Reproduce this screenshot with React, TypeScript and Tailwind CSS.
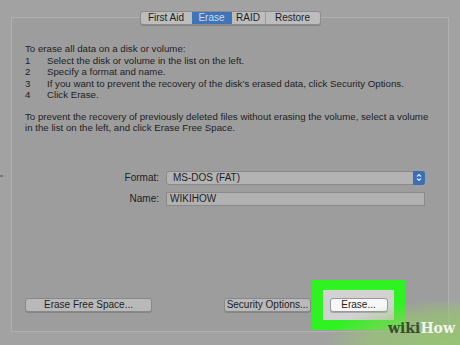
export default function App() {
  const steps = [
    "Select the disk or volume in the list on the left.",
    "Specify a format and name.",
    "If you want to prevent the recovery of the disk\u2019s erased data, click Security Options.",
    "Click Erase.",
  ];
  const tabs = ["First Aid", "Erase", "RAID", "Restore"];
  const tabW = ["w-[51px]", "w-[40px]", "w-[33px]", "w-[55px]"];

  return (
    <div className="relative w-[460px] h-[345px] overflow-hidden bg-[#a2a2a2] pt-[11px] text-[#1e1e1e] [font-family:'Liberation_Sans',Arial,sans-serif]">
      {/* segmented tabs */}
      <div className="relative z-10 flex justify-center">
        <div className="flex h-[14px] rounded-[3px] border border-[#8c8c8c] bg-[#bdbdbd] shadow-[0_1px_0_rgba(0,0,0,0.15)] overflow-hidden text-[10px] leading-[12px]">
          {tabs.map((t, i) => (
            <div
              key={t}
              className={
                tabW[i] +
                " flex items-center justify-center " +
                (t === "Erase" ? "bg-[#3f74b8] text-[#c9dbf2]" : "text-[#1e1e1e]") +
                (i > 0 && t !== "Erase" && tabs[i - 1] !== "Erase" ? " border-l border-[#9a9a9a]" : "")
              }
            >
              {t}
            </div>
          ))}
        </div>
      </div>

      {/* panel */}
      <div className="mx-[11px] -mt-[8px] h-[315px] border border-[#b0b0b0] bg-[#9d9d9d] px-[13px] pt-[25px] flex flex-col text-[9.7px] leading-[11.5px] whitespace-nowrap">
        <p>To erase all data on a disk or volume:</p>
        {steps.map((s, i) => (
          <div key={i} className="flex">
            <span className="w-[22px] shrink-0">{i + 1}</span>
            <span>{s}</span>
          </div>
        ))}
        <p className="mt-[10px]">
          To prevent the recovery of previously deleted files without erasing the volume, select a volume
          <br />
          in the list on the left, and click Erase Free Space.
        </p>

        {/* format / name */}
        <div className="mt-[37px] flex flex-col gap-[7px] text-[10px]">
          <div className="flex items-center">
            <span className="w-[141px] text-right pr-[7px] shrink-0">Format:</span>
            <div className="flex h-[14px] w-[259px] items-center justify-between rounded-[3px] border border-[#8a8a8a] bg-[#b3b3b3] pl-[6px]">
              <span>MS-DOS (FAT)</span>
              <div className="flex h-[14px] w-[12px] items-center justify-center rounded-r-[3px] bg-[#3a6fb5] -mr-px">
                <svg width="6" height="9" viewBox="0 0 6 9" fill="none" stroke="#dbe7f7" strokeWidth="1.2">
                  <path d="M1 3.5 L3 1.5 L5 3.5" />
                  <path d="M1 5.5 L3 7.5 L5 5.5" />
                </svg>
              </div>
            </div>
          </div>
          <div className="flex items-center">
            <span className="w-[141px] text-right pr-[7px] shrink-0">Name:</span>
            <div className="flex h-[14px] w-[259px] items-center border border-[#8a8a8a] bg-[#b1b1b1] pl-[3px]">
              WIKIHOW
            </div>
          </div>
        </div>

        {/* buttons */}
        <div className="mt-auto mb-[1px] flex items-center text-[10px]">
          <div className="flex h-[14px] w-[127px] items-center justify-center rounded-[3px] border border-[#888] bg-[#b9b9b9] shadow-[0_1px_0_rgba(0,0,0,0.15)]">
            Erase Free Space...
          </div>
          <div className="ml-[72px] flex h-[14px] w-[87px] items-center justify-center rounded-[3px] border border-[#888] bg-[#b9b9b9] shadow-[0_1px_0_rgba(0,0,0,0.15)]">
            Security Options...
          </div>
          <div className="ml-[1px] flex h-[50px] w-[93px] items-center justify-center bg-[#2ef222]">
            <div className="flex h-[30px] w-[71px] items-center justify-center bg-[#d2d2d2]">
              <div className="flex h-[14px] w-[58px] items-center justify-center rounded-[3px] border border-[#999] bg-[#f7f7f7] shadow-[0_1px_0_rgba(0,0,0,0.2)]">
                Erase...
              </div>
            </div>
          </div>
        </div>
      </div>

      {/* side mark */}
      <div className="absolute left-0 top-[175px] h-[2px] w-[3px] bg-[#7a7a7a]" />

      {/* wikiHow watermark */}
      <div className="absolute right-0 bottom-0 h-[44px] w-[130px] bg-[radial-gradient(ellipse_at_100%_100%,rgba(150,200,110,0.9)_0%,rgba(150,200,110,0.6)_50%,rgba(150,200,110,0)_75%)]" />
      <div className="absolute right-[5px] bottom-[10px] text-[14px] font-bold leading-none [font-family:'DejaVu_Serif',serif]">
        <span className="text-[#3c4a32]">wiki</span>
        <span className="text-[#f2f5ee]">How</span>
      </div>
    </div>
  );
}
